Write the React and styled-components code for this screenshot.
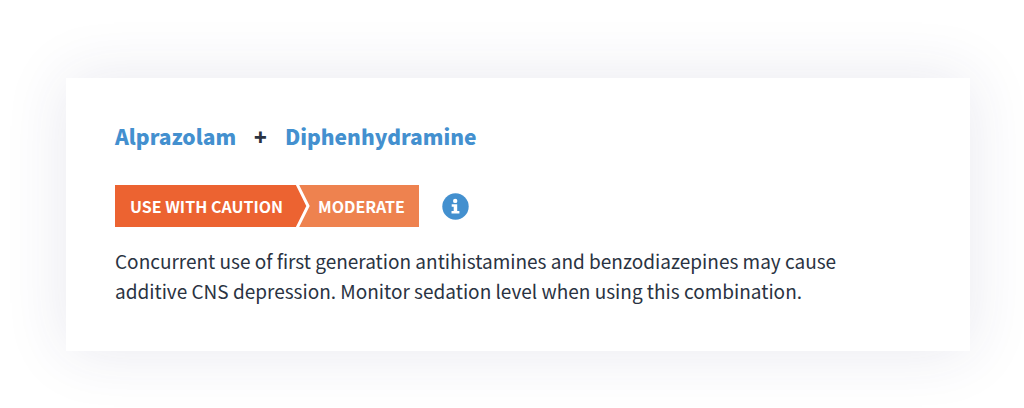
import React from "react";
import styled, { createGlobalStyle } from "styled-components";

const GlobalStyle = createGlobalStyle`
  body {
    margin: 0;
    background: #ffffff;
    color: #2a3342;
    font-family: "Noto Sans CJK SC", "Noto Sans", sans-serif;
  }
`;

const Page = styled("main")`
  padding: 78px 54px 56px 66px;
`;

const Card = styled("article")`
  padding: 40px 49px 45px;
  background: #ffffff;
  box-shadow: 0 0 60px rgba(50, 50, 110, 0.11);
`;

const DrugPair = styled("h2")`
  display: flex;
  flex-wrap: wrap;
  align-items: center;
  gap: 0 18px;
  margin: 0;
  font-size: 21px;
  font-weight: 900;
  line-height: 36px;
`;

const DrugLink = styled("a")`
  color: #4390cf;
  text-decoration: none;

  &:hover {
    text-decoration: underline;
  }
`;

const SeverityRow = styled("div")`
  display: flex;
  align-items: center;
  gap: 23px;
  margin-top: 31px;
`;

const Severity = styled("div")`
  display: flex;
  color: #ffffff;
  font-size: 16px;
  font-weight: 700;
  line-height: 42px;
  white-space: nowrap;
`;

const Action = styled("span")`
  padding: 0 14px 0 15px;
  background: #ec6331;
`;

const Level = styled("span")`
  padding: 0 14px 0 8px;
  background: #ee824f;
`;

const Arrow = styled("svg")`
  display: block;
  width: 14px;
  height: 42px;
  margin-left: -1px;
`;

const InfoButton = styled("button")`
  display: flex;
  padding: 0;
  border: 0;
  border-radius: 50%;
  background: none;
  cursor: pointer;
`;

const Description = styled("p")`
  max-width: 740px;
  margin: 19px 0 0;
  font-size: 19px;
  line-height: 30px;
`;

const Chevron = () => (
    <Arrow viewBox="0 0 14 42" aria-hidden="true">
        <path d="M0 0H14V42H0Z" fill="#ee824f" />
        <path d="M0 0H1L12 21L1 42H0Z" fill="#ec6331" />
        <path d="M1 -1L12 21L1 43" fill="none" stroke="#ffffff" strokeWidth="3" />
    </Arrow>
);

const InfoIcon = () => (
    <svg width="27" height="27" viewBox="0 0 27 27" aria-hidden="true">
        <circle cx="13.5" cy="13.5" r="13.2" fill="#4390cf" />
        <circle cx="13.2" cy="7.9" r="2.2" fill="#ffffff" />
        <path d="M9.7 11.3H15.2V18.1H17.4V20.6H9.5V18.1H11.7V13.7H9.7Z" fill="#ffffff" />
    </svg>
);

const interaction = {
    drugs: ["Alprazolam", "Diphenhydramine"],
    action: "USE WITH CAUTION",
    level: "MODERATE",
    description:
        "Concurrent use of first generation antihistamines and benzodiazepines may cause additive CNS depression. Monitor sedation level when using this combination.",
};

const App = () => {
    const [first, second] = interaction.drugs;

    return (
        <Page>
            <GlobalStyle />
            <Card>
                <DrugPair>
                    <DrugLink href="#alprazolam">{first}</DrugLink>
                    <span>+</span>
                    <DrugLink href="#diphenhydramine">{second}</DrugLink>
                </DrugPair>
                <SeverityRow>
                    <Severity>
                        <Action>{interaction.action}</Action>
                        <Chevron />
                        <Level>{interaction.level}</Level>
                    </Severity>
                    <InfoButton type="button" aria-label="About severity levels">
                        <InfoIcon />
                    </InfoButton>
                </SeverityRow>
                <Description>{interaction.description}</Description>
            </Card>
        </Page>
    );
};

export default App;
